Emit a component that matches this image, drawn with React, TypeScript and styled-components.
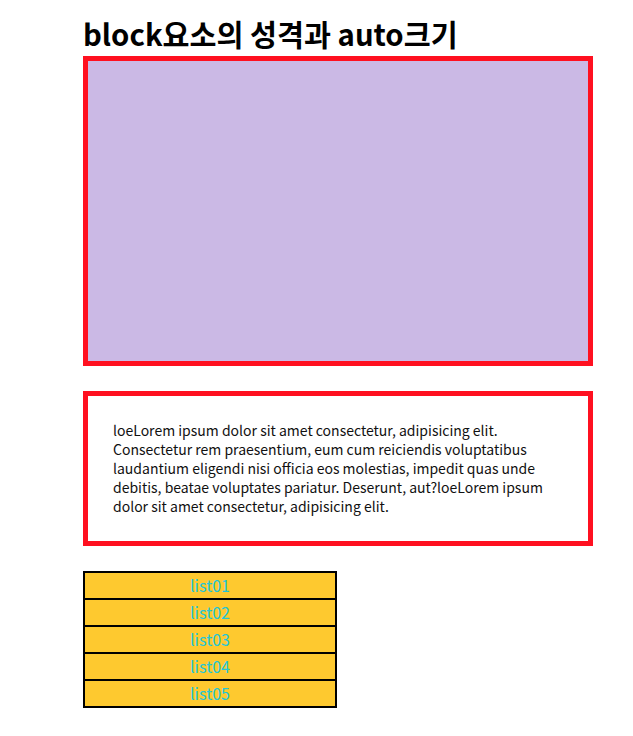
import styled, { createGlobalStyle } from "styled-components";

const GlobalStyle = createGlobalStyle`
  body {
    margin: 0;
    background: #fff;
    font-family: "Noto Sans CJK KR", "Noto Sans", sans-serif;
  }
`;

const Wrapper = styled.div`
  padding: 16px 0 0 83px;
`;

const Title = styled.h1`
  margin: 0 0 5px;
  font-size: 29.3px;
  line-height: 35px;
  font-weight: 700;
  color: #000;
`;

const Box = styled.div`
  width: 500px;
  height: 300px;
  background-color: #cbb9e5;
  border: 5px solid #ff1020;
`;

const TextBox = styled.div`
  width: 450px;
  padding: 25px;
  margin-top: 25px;
  border: 5px solid #ff1020;
  font-size: 14px;
  line-height: 19px;
  color: #111;
`;

const List = styled.ul`
  width: 252px;
  margin: 25px 0 0;
  padding: 0;
  list-style: none;
  border: 1px solid #000;
`;

const Item = styled.li`
  height: 25px;
  line-height: 25px;
  border: 1px solid #000;
  background-color: #fec92f;
  color: #22c6d8;
  text-align: center;
  font-size: 16px;
`;

const items = ["list01", "list02", "list03", "list04", "list05"];

function App() {
  return (
    <>
      <GlobalStyle />
      <Wrapper>
        <Title>block요소의 성격과 auto크기</Title>
        <Box />
        <TextBox>
          loeLorem ipsum dolor sit amet consectetur, adipisicing elit.
          Consectetur rem praesentium, eum cum reiciendis voluptatibus
          laudantium eligendi nisi officia eos molestias, impedit quas unde
          debitis, beatae voluptates pariatur. Deserunt, aut?loeLorem ipsum
          dolor sit amet consectetur, adipisicing elit.
        </TextBox>
        <List>
          {items.map((item) => (
            <Item key={item}>{item}</Item>
          ))}
        </List>
      </Wrapper>
    </>
  );
}

export default App;
